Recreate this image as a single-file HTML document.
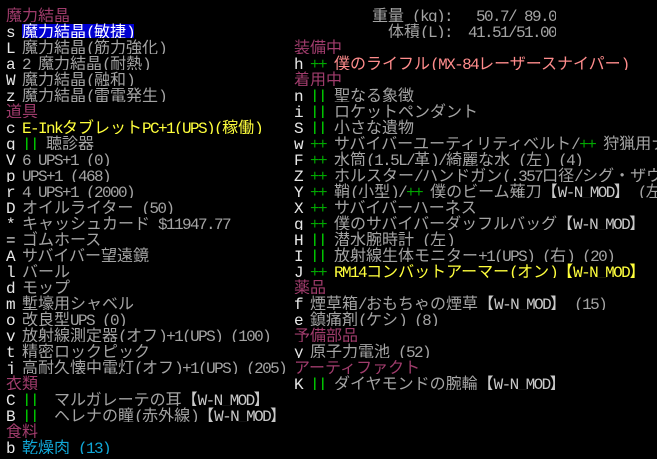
<!DOCTYPE html>
<html><head><meta charset="utf-8"><style>
body{margin:0;width:657px;height:459px;background:#000;overflow:hidden;position:relative;font-family:"Liberation Mono",monospace;font-size:16px;letter-spacing:-1.6px;color:#a4a4a4}
.r{position:absolute;height:16px;line-height:16px;white-space:pre;overflow:hidden}
.L{left:6px;width:288px}
.R{left:294px;width:363px}
u{text-decoration:none;font-family:"Noto Sans CJK JP",sans-serif;font-size:16px;line-height:16px;letter-spacing:0}
.k{color:#e8e8e8}
.m{color:#a03c6c}
.g{color:#00a800}
.G{color:#00e000}
.y{color:#ffff3c}
.p{color:#ff8c8c}
.c{color:#10a8d8}
.br{color:#c8c8c8}
.sel{background:#0000d0;color:#fff}
</style></head><body>
<div class="r L m" style="top:5.5px"><u>魔力結晶</u></div>
<div class="r L" style="top:21.5px"><span class="k">s </span><span class="sel"><u>魔力結晶</u>(<u>敏捷</u>)</span></div>
<div class="r L" style="top:37.5px"><span class="k">L </span><u>魔力結晶</u>(<u>筋力強化</u>)</div>
<div class="r L" style="top:53.5px"><span class="k">a </span>2 <u>魔力結晶</u>(<u>耐熱</u>)</div>
<div class="r L" style="top:69.5px"><span class="k">W </span><u>魔力結晶</u>(<u>融和</u>)</div>
<div class="r L" style="top:85.5px"><span class="k">z </span><u>魔力結晶</u>(<u>雷電発生</u>)</div>
<div class="r L m" style="top:101.5px"><u>道具</u></div>
<div class="r L" style="top:117.5px"><span class="k">c </span><span class="y">E-Ink<u>タブレット</u>PC+1(UPS)(<u>稼働</u>)</span></div>
<div class="r L" style="top:133.5px"><span class="k">q </span><span class="G">||</span> <u>聴診器</u></div>
<div class="r L" style="top:149.5px"><u>&#8203;</u><span class="k">V </span>6 UPS+1 (0)</div>
<div class="r L" style="top:165.5px"><u>&#8203;</u><span class="k">p </span>UPS+1 (468)</div>
<div class="r L" style="top:181.5px"><u>&#8203;</u><span class="k">r </span>4 UPS+1 (2000)</div>
<div class="r L" style="top:197.5px"><span class="k">D </span><u>オイルライター</u> (50)</div>
<div class="r L" style="top:213.5px"><span class="k">* </span><u>キャッシュカード</u> $11947.77</div>
<div class="r L" style="top:229.5px"><span class="k">= </span><u>ゴムホース</u></div>
<div class="r L" style="top:245.5px"><span class="k">A </span><u>サバイバー望遠鏡</u></div>
<div class="r L" style="top:261.5px"><span class="k">l </span><u>バール</u></div>
<div class="r L" style="top:277.5px"><span class="k">d </span><u>モップ</u></div>
<div class="r L" style="top:293.5px"><span class="k">m </span><u>塹壕用シャベル</u></div>
<div class="r L" style="top:309.5px"><span class="k">o </span><u>改良型</u>UPS (0)</div>
<div class="r L" style="top:325.5px"><span class="k">v </span><u>放射線測定器</u>(<u>オフ</u>)+1(UPS) (100)</div>
<div class="r L" style="top:341.5px"><span class="k">t </span><u>精密ロックピック</u></div>
<div class="r L" style="top:357.5px"><span class="k">j </span><u>高耐久懐中電灯</u>(<u>オフ</u>)+1(UPS) (205)</div>
<div class="r L m" style="top:373.5px"><u>衣類</u></div>
<div class="r L" style="top:389.5px"><span class="k">C </span><span class="G">||</span>  <u>マルガレーテの耳</u><span class="br"><u>【</u>W-N_MOD<u>】</u></span></div>
<div class="r L" style="top:405.5px"><span class="k">B </span><span class="G">||</span>  <u>ヘレナの瞳</u>(<u>赤外線</u>)<span class="br"><u>【</u>W-N_MOD<u>】</u></span></div>
<div class="r L m" style="top:421.5px"><u>食料</u></div>
<div class="r L" style="top:437.5px"><span class="k">b </span><span class="c"><u>乾燥肉</u> (13)</span></div>

<div class="r" style="top:5.5px;left:372px"><u>重量</u> (kg):   50.7/ 89.0</div>
<div class="r" style="top:21.5px;left:388px"><u>体積</u>(L):  41.51/51.00</div>
<div class="r R m" style="top:37.5px"><u>装備中</u></div>
<div class="r R" style="top:53.5px"><span class="k">h </span><span class="g">++</span> <span class="p"><u>僕のライフル</u>(MX-84<u>レーザースナイパー</u>)</span></div>
<div class="r R m" style="top:69.5px"><u>着用中</u></div>
<div class="r R" style="top:85.5px"><span class="k">n </span><span class="G">||</span> <u>聖なる象徴</u></div>
<div class="r R" style="top:101.5px"><span class="k">i </span><span class="G">||</span> <u>ロケットペンダント</u></div>
<div class="r R" style="top:117.5px"><span class="k">S </span><span class="G">||</span> <u>小さな遺物</u></div>
<div class="r R" style="top:133.5px"><span class="k">w </span><span class="g">++</span> <u>サバイバーユーティリティベルト</u>/<span class="g">++</span> <u>狩猟用ナイフ</u></div>
<div class="r R" style="top:149.5px"><span class="k">F </span><span class="g">++</span> <u>水筒</u>(1.5L/<u>革</u>)/<u>綺麗な水</u> (<u>左</u>) (4)</div>
<div class="r R" style="top:165.5px"><span class="k">Z </span><span class="g">++</span> <u>ホルスター</u>/<u>ハンドガン</u>(.357<u>口径</u>/<u>シグ・ザウエル</u>)</div>
<div class="r R" style="top:181.5px"><span class="k">Y </span><span class="g">++</span> <u>鞘</u>(<u>小型</u>)/<span class="g">++</span> <u>僕のビーム薙刀</u><span class="br"><u>【</u>W-N_MOD<u>】</u></span> (<u>左</u>)</div>
<div class="r R" style="top:197.5px"><span class="k">X </span><span class="g">++</span> <u>サバイバーハーネス</u></div>
<div class="r R" style="top:213.5px"><span class="k">g </span><span class="g">++</span> <u>僕のサバイバーダッフルバッグ</u><span class="br"><u>【</u>W-N_MOD<u>】</u></span></div>
<div class="r R" style="top:229.5px"><span class="k">H </span><span class="G">||</span> <u>潜水腕時計</u> (<u>左</u>)</div>
<div class="r R" style="top:245.5px"><span class="k">I </span><span class="G">||</span> <u>放射線生体モニター</u>+1(UPS) (<u>右</u>) (20)</div>
<div class="r R" style="top:261.5px"><span class="k">J </span><span class="g">++</span> <span class="y">RM14<u>コンバットアーマー</u>(<u>オン</u>)<u>【</u>W-N_MOD<u>】</u></span></div>
<div class="r R m" style="top:277.5px"><u>薬品</u></div>
<div class="r R" style="top:293.5px"><span class="k">f </span><u>煙草箱</u>/<u>おもちゃの煙草</u><span class="br"><u>【</u>W-N_MOD<u>】</u></span> (15)</div>
<div class="r R" style="top:309.5px"><span class="k">e </span><u>鎮痛剤</u>(<u>ケシ</u>) (8)</div>
<div class="r R m" style="top:325.5px"><u>予備部品</u></div>
<div class="r R" style="top:341.5px"><span class="k">y </span><u>原子力電池</u> (52)</div>
<div class="r R m" style="top:357.5px"><u>アーティファクト</u></div>
<div class="r R" style="top:373.5px"><span class="k">K </span><span class="G">||</span> <u>ダイヤモンドの腕輪</u><span class="br"><u>【</u>W-N_MOD<u>】</u></span></div>
</body></html>
